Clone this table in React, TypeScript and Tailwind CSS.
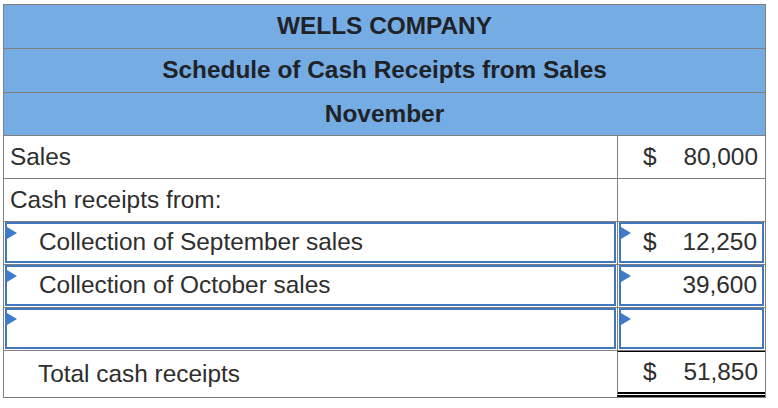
import React from "react";

const Tri = () => (
  <div className="absolute left-0 top-[3px] w-0 h-0 border-l-[10px] border-l-[#3d7cc9] border-y-[6px] border-y-transparent" />
);

const InputBox = ({ children, className = "" }: { children?: React.ReactNode; className?: string }) => (
  <div className={`relative h-full border-2 border-[#4077bd] ${className}`}>
    <Tri />
    {children}
  </div>
);

const Money = ({ sign, value }: { sign?: boolean; value?: string }) => (
  <div className="flex items-center h-full pl-[25px] pr-[7px]">
    <span className="w-[20px]">{sign ? "$" : ""}</span>
    <span className="flex-1 text-right">{value}</span>
  </div>
);

export default function App() {
  return (
    <div
      className="pl-[3px] pt-[4px] bg-white text-[#2e2e2e] text-[24.4px]"
      style={{ fontFamily: '"Liberation Sans", Arial, sans-serif' }}
    >
      <div className="w-[763px] border border-[#7f7f7f]">
        {/* Header */}
        <div className="bg-[#76ace4] font-bold text-[#1f2328]">
          <div className="h-[44px] border-b border-[#7f7f7f] flex items-center justify-center">WELLS COMPANY</div>
          <div className="h-[44px] border-b border-[#7f7f7f] flex items-center justify-center">
            Schedule of Cash Receipts from Sales
          </div>
          <div className="h-[43px] border-b border-[#7f7f7f] flex items-center justify-center">November</div>
        </div>

        {/* Sales */}
        <div className="h-[43px] border-b border-[#7f7f7f] flex">
          <div className="flex-1 flex items-center pl-[6px]">Sales</div>
          <div className="w-[148px] border-l border-[#7f7f7f]">
            <Money sign value="80,000" />
          </div>
        </div>

        {/* Cash receipts from */}
        <div className="h-[43px] border-b border-[#7f7f7f] flex">
          <div className="flex-1 flex items-center pl-[6px]">Cash receipts from:</div>
          <div className="w-[148px] border-l border-[#7f7f7f]" />
        </div>

        {/* September */}
        <div className="h-[43px] border-b border-[#7f7f7f] flex">
          <div className="flex-1 pl-px pr-px pb-px">
            <InputBox className="flex items-center pl-[32px]">Collection of September sales</InputBox>
          </div>
          <div className="w-[148px] border-l border-[#7f7f7f] pl-px pr-px pb-px">
            <InputBox>
              <div className="flex items-center h-full pl-[22px] pr-[5px]">
                <span className="w-[20px]">$</span>
                <span className="flex-1 text-right">12,250</span>
              </div>
            </InputBox>
          </div>
        </div>

        {/* October */}
        <div className="h-[43px] border-b border-[#7f7f7f] flex">
          <div className="flex-1 pl-px pr-px pb-px">
            <InputBox className="flex items-center pl-[32px]">Collection of October sales</InputBox>
          </div>
          <div className="w-[148px] border-l border-[#7f7f7f] pl-px pr-px pb-px">
            <InputBox>
              <div className="flex items-center h-full pl-[22px] pr-[5px]">
                <span className="w-[20px]"></span>
                <span className="flex-1 text-right">39,600</span>
              </div>
            </InputBox>
          </div>
        </div>

        {/* Empty */}
        <div className="h-[43px] border-b border-[#7f7f7f] flex">
          <div className="flex-1 pl-px pr-px pb-px">
            <InputBox />
          </div>
          <div className="w-[148px] border-l border-[#7f7f7f] pl-px pr-px pb-px">
            <InputBox />
          </div>
        </div>

        {/* Total */}
        <div className="h-[46px] flex">
          <div className="flex-1 flex items-center pl-[34px]">Total cash receipts</div>
          <div className="w-[148px] border-l border-[#7f7f7f] border-t border-t-black border-b-[5px] border-b-black [border-bottom-style:double]">
            <Money sign value="51,850" />
          </div>
        </div>
      </div>
    </div>
  );
}
